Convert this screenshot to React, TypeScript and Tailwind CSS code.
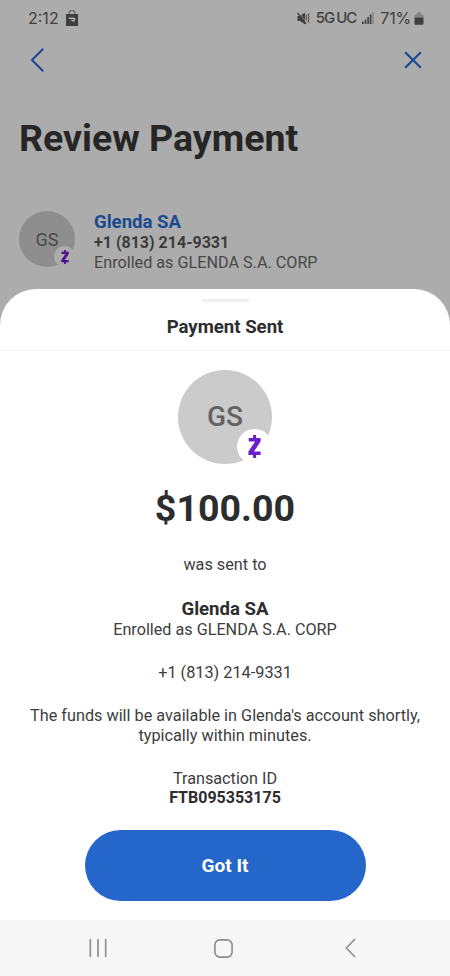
import React from 'react';

const App: React.FC = () => {
  return (
    <div className="relative flex h-[976px] w-[450px] flex-col overflow-hidden bg-[#acacac] font-['Roboto',sans-serif] text-[#2d2d2f]">
      {/* Status bar */}
      <div className="flex h-9 shrink-0 items-center justify-between pl-7 pr-[26px] text-[#3f3f3f]">
        <div className="flex items-center gap-[7px]">
          <span className="font-['Inter',sans-serif] text-[16px] leading-5">2:12</span>
          <BagIcon />
        </div>
        <div className="flex items-center">
          <MuteIcon />
          <span className="ml-[6px] font-['Inter',sans-serif] text-[15px] font-medium leading-5 tracking-[-1px]">5G<span className="ml-[2px]">UC</span></span>
          <SignalIcon />
          <span className="ml-[6px] font-['Inter',sans-serif] text-[16px] leading-5 tracking-[-0.2px]">71%</span>
          <BatteryIcon />
        </div>
      </div>

      {/* Header */}
      <div className="flex h-[48px] shrink-0 items-center justify-between pl-[30px] pr-[28px] text-[#1c4a92]">
        <svg width="15" height="26" viewBox="0 0 15 26" fill="none" stroke="currentColor" strokeWidth="2"><path d="M13.2 1.8L2 13L13.2 24.2" /></svg>
        <svg width="18" height="18" viewBox="0 0 18 18" fill="none" stroke="currentColor" strokeWidth="2.2"><path d="M1.2 1.2L16.8 16.8M16.8 1.2L1.2 16.8" /></svg>
      </div>

      <h1 className="mt-[30px] h-12 shrink-0 pl-[19px] text-[37.5px] font-bold leading-[48px] text-[#262626]">Review Payment</h1>

      {/* Recipient */}
      <div className="mt-[49px] flex h-[78px] shrink-0 pl-[19px]">
        <div className="relative flex size-14 items-center justify-center rounded-full bg-[#8e8e8e] text-[18px] text-[#484848]">
          GS
          <span className="absolute bottom-0 right-0 flex size-[21px] items-center justify-center rounded-full bg-[#acacac] text-[#50108f]">
            <ZelleMark width={8} height={14} />
          </span>
        </div>
        <div className="ml-[19px]">
          <p className="text-[18.6px] font-bold leading-[22px] text-[#1c4a92]">Glenda SA</p>
          <p className="text-[16px] font-bold leading-5 text-[#3c3c3c]">+1 (813) 214-9331</p>
          <p className="text-[16.2px] leading-5 text-[#484848]">Enrolled as GLENDA S.A. CORP</p>
        </div>
      </div>

      {/* Bottom sheet */}
      <div className="flex h-[631px] shrink-0 flex-col items-center rounded-t-[36px] bg-white">
        <div className="mt-[10px] h-[3px] w-[47px] shrink-0 bg-[#f0f0f0]"></div>
        <h2 className="mt-[13px] h-6 text-[18.6px] font-bold leading-6">Payment Sent</h2>
        <div className="mt-[11px] h-px w-full bg-[#f5f5f5]"></div>

        <div className="relative mt-[19px] flex size-[94px] shrink-0 items-center justify-center rounded-full bg-[#cbcbcb] text-[28px] font-medium text-[#636363]">
          GS
          <span className="absolute bottom-0 right-0 flex size-[35px] items-center justify-center rounded-full bg-white text-[#6a1fc9]">
            <ZelleMark width={13} height={23} />
          </span>
        </div>

        <p className="mt-[20px] text-[37.6px] font-bold leading-[48px]">$100.00</p>
        <p className="mt-[23px] text-[16.25px] leading-5 text-[#3d3d3d]">was sent to</p>
        <p className="mt-[23px] text-[18.6px] font-bold leading-[22px]">Glenda SA</p>
        <p className="text-[16.2px] leading-5 text-[#3d3d3d]">Enrolled as GLENDA S.A. CORP</p>
        <p className="mt-[23px] text-[16.3px] leading-5 text-[#3d3d3d]">+1 (813) 214-9331</p>
        <p className="mt-[23px] text-center text-[16.25px] leading-5 text-[#3d3d3d]">
          The funds will be available in Glenda's account shortly,<br />
          typically within minutes.
        </p>
        <p className="mt-[23px] text-[16.2px] leading-[19px] text-[#3d3d3d]">Transaction ID</p>
        <p className="text-[16px] font-bold leading-5">FTB095353175</p>
        <button className="mt-[22px] h-[71px] w-[281px] shrink-0 rounded-full bg-[#2566ca] pt-[2px] text-[19px] font-bold text-white">Got It</button>
      </div>

      {/* Android navigation */}
      <div className="flex h-14 shrink-0 items-center bg-[#f6f6f6] pl-[89px] text-[#8b8b8b]">
        <svg width="18" height="18" viewBox="0 0 18 18" fill="none" stroke="currentColor" strokeWidth="1.6"><path d="M1.3 0V18M9 0V18M16.7 0V18" /></svg>
        <svg className="ml-[107px]" width="19" height="19" viewBox="0 0 19 19" fill="none" stroke="currentColor" strokeWidth="1.6"><rect x="0.9" y="0.9" width="17.2" height="17.2" rx="5" /></svg>
        <svg className="ml-[112px]" width="11" height="20" viewBox="0 0 11 20" fill="none" stroke="currentColor" strokeWidth="1.5"><path d="M10 1L1.3 10L10 19" /></svg>
      </div>
    </div>
  );
};

const ZelleMark = ({ width, height }: { width: number, height: number }) => (
  <svg width={width} height={height} viewBox="0 0 13 23" fill="currentColor">
    <path d="M5.1 0H8.1V3H12.6V6.6L5.9 16.6H12.6V20H8.1V23H5.1V20H0.4V16.6L7.2 6.4H0.7V3H5.1Z" />
  </svg>
);

const BagIcon = () => (
  <svg width="12" height="16" viewBox="0 0 12 16" fill="none">
    <path d="M3 4.5V2.8a3 2.2 0 0 1 6 0v1.7" stroke="#666" strokeWidth="1.1" />
    <path d="M0 4H12V16H0Z" fill="currentColor" />
    <path d="M2.2 7.6H7.6C10 7.6 10 11.4 7.6 11.4H6L5.2 10H7.4C7.9 10 7.9 9.2 7.4 9.2H3.7Z" fill="#acacac" />
  </svg>
);

const MuteIcon = () => (
  <svg width="13" height="13" viewBox="0 0 13 13" fill="none" stroke="currentColor">
    <path d="M0.5 4H3L8 0.6V12.2L3 9H0.5Z" fill="currentColor" stroke="none" />
    <path d="M1.6 0.4L10 10.8" stroke="#acacac" strokeWidth="0.7" />
    <path d="M0.6 1L9 11.8" strokeWidth="1.3" />
    <path d="M9.6 2.5L8.9 4L9.6 5.5L8.9 7L9.6 8.5M12 1.5L11.2 3L12 4.5L11.2 6L12 7.5L11.2 9L12 10.5" />
  </svg>
);

const SignalIcon = () => (
  <svg className="ml-[6px]" width="12" height="12" viewBox="0 0 12 12" fill="currentColor">
    <path d="M0 9.5H1.6V12H0ZM2.7 7.5H4.3V12H2.7ZM5.3 5H6.9V12H5.3ZM7.8 2.5H9.4V12H7.8Z" />
    <path d="M10.3 0H11.7V12H10.3Z" fill="#858585" />
  </svg>
);

const BatteryIcon = () => (
  <svg className="ml-[3px]" width="10" height="13" viewBox="0 0 10 13">
    <path d="M0.5 5.5V3.4L3.3 1.8V0.3H6.7V1.8L9.5 3.4V5.5Z" fill="#858585" />
    <path d="M0.5 5.5H9.5V11.5A1.2 1.2 0 0 1 8.3 12.7H1.7A1.2 1.2 0 0 1 0.5 11.5Z" fill="currentColor" />
  </svg>
);

export default App;
